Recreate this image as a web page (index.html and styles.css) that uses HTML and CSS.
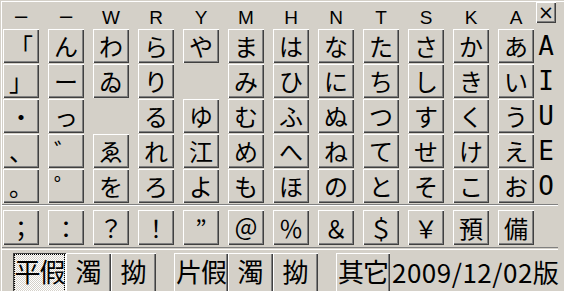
FILE: index.html
```html
<!DOCTYPE html>
<html>
<head>
<meta charset="utf-8">
<title>かな入力パレット</title>
<link rel="stylesheet" href="styles.css">
</head>
<body>
<div class="panel">
  <div class="keyboard">
    <div class="grid">
      <div class="head dash">–</div>
      <div class="head dash">–</div>
      <div class="head">W</div>
      <div class="head">R</div>
      <div class="head">Y</div>
      <div class="head">M</div>
      <div class="head">H</div>
      <div class="head">N</div>
      <div class="head">T</div>
      <div class="head">S</div>
      <div class="head">K</div>
      <div class="head">A</div>

      <div class="key">「</div>
      <div class="key">ん</div>
      <div class="key">わ</div>
      <div class="key">ら</div>
      <div class="key">や</div>
      <div class="key">ま</div>
      <div class="key">は</div>
      <div class="key">な</div>
      <div class="key">た</div>
      <div class="key">さ</div>
      <div class="key">か</div>
      <div class="key">あ</div>

      <div class="key">」</div>
      <div class="key">ー</div>
      <div class="key">ゐ</div>
      <div class="key">り</div>
      <div class="blank"></div>
      <div class="key">み</div>
      <div class="key">ひ</div>
      <div class="key">に</div>
      <div class="key">ち</div>
      <div class="key">し</div>
      <div class="key">き</div>
      <div class="key">い</div>

      <div class="key">・</div>
      <div class="key">っ</div>
      <div class="blank"></div>
      <div class="key">る</div>
      <div class="key">ゆ</div>
      <div class="key">む</div>
      <div class="key">ふ</div>
      <div class="key">ぬ</div>
      <div class="key">つ</div>
      <div class="key">す</div>
      <div class="key">く</div>
      <div class="key">う</div>

      <div class="key">、</div>
      <div class="key">゛</div>
      <div class="key">ゑ</div>
      <div class="key">れ</div>
      <div class="key">江</div>
      <div class="key">め</div>
      <div class="key">へ</div>
      <div class="key">ね</div>
      <div class="key">て</div>
      <div class="key">せ</div>
      <div class="key">け</div>
      <div class="key">え</div>

      <div class="key">。</div>
      <div class="key">゜</div>
      <div class="key">を</div>
      <div class="key">ろ</div>
      <div class="key">よ</div>
      <div class="key">も</div>
      <div class="key">ほ</div>
      <div class="key">の</div>
      <div class="key">と</div>
      <div class="key">そ</div>
      <div class="key">こ</div>
      <div class="key">お</div>
    </div>
    <div class="side">
      <div class="side-head"><div class="close">×</div></div>
      <div class="vowel">A</div>
      <div class="vowel">I</div>
      <div class="vowel">U</div>
      <div class="vowel">E</div>
      <div class="vowel">O</div>
    </div>
  </div>

  <div class="groove"></div>

  <div class="symbols">
    <div class="key">；</div>
    <div class="key">：</div>
    <div class="key">？</div>
    <div class="key">！</div>
    <div class="key">”</div>
    <div class="key">＠</div>
    <div class="key">％</div>
    <div class="key">＆</div>
    <div class="key">＄</div>
    <div class="key">￥</div>
    <div class="key">預</div>
    <div class="key">備</div>
  </div>

  <div class="groove wide"></div>

  <div class="modes">
    <div class="btn w2 pressed">平假</div>
    <div class="btn">濁</div>
    <div class="btn">拗</div>
    <div class="btn w2 gap">片假</div>
    <div class="btn">濁</div>
    <div class="btn">拗</div>
    <div class="btn w2 gap">其它</div>
    <div class="version">2009/12/02版</div>
  </div>
</div>
</body>
</html>
```

FILE: styles.css
```css
* { box-sizing: border-box; }
body { margin: 0; background: #d4d0c8; font-family: "Noto Sans CJK JP", sans-serif; color: #000; }

.panel { width: 563px; height: 290px; margin: 1px 0 0 1px; padding-left: 1px; border-top: 1px solid #fff; border-left: 1px solid #fff; overflow: hidden; }

.keyboard { display: flex; }
.grid { display: grid; grid-template-columns: repeat(12, 36px); grid-template-rows: 26px repeat(5, 34px); column-gap: 9px; row-gap: 1px; }

.head { display: flex; align-items: flex-end; justify-content: center; padding-bottom: 1px; font-family: "Liberation Sans", Arial, sans-serif; font-size: 19px; line-height: 19px; }
.head.dash { font-size: 22px; padding-bottom: 3px; }

.key { display: flex; align-items: center; justify-content: center; background: #d4d0c8; font-size: 24px; line-height: 1; box-shadow: inset 1px 1px #fff, inset -1px -1px #404040, inset -2px -2px #808080; }

.side { width: 24px; display: grid; grid-template-rows: 26px repeat(5, 34px); row-gap: 1px; }
.side-head { display: flex; justify-content: flex-end; padding-right: 2px; }
.close { width: 20px; height: 21px; display: flex; align-items: center; justify-content: center; font-family: "DejaVu Sans", sans-serif; font-size: 19px; line-height: 1; box-shadow: inset 1px 1px #fff, inset -1px -1px #404040, inset -2px -2px #808080; }
.vowel { display: flex; align-items: center; justify-content: center; font-family: "DejaVu Sans Mono", monospace; font-size: 26px; line-height: 1; }

.groove { width: 557px; height: 2px; margin-top: 1px; margin-left: -2px; border-top: 1px solid #808080; border-bottom: 1px solid #fff; }
.groove.wide { height: 3px; margin-top: 2px; }

.symbols { display: grid; grid-template-columns: repeat(12, 36px); column-gap: 9px; height: 35px; margin-top: 4px; }

.modes { display: flex; align-items: flex-start; margin-top: 3px; padding-left: 10px; }
.btn { width: 45px; height: 40px; display: flex; align-items: center; justify-content: center; padding-bottom: 4px; font-size: 26px; line-height: 1; box-shadow: inset 1px 1px #fff, inset -1px -1px #404040, inset -2px -2px #808080; }
.btn.w2 { width: 53px; letter-spacing: -1px; }
.btn.gap { margin-left: 18px; width: 54px; }
.btn.pressed { background: repeating-conic-gradient(#fff 0 25%, #d4d0c8 0 50%) 0 0 / 2px 2px; box-shadow: inset 1px 1px #404040, inset -1px -1px #fff; outline: 1px dotted #000; outline-offset: -2px; }
.version { margin-left: 2px; padding-top: 3px; font-size: 26px; line-height: 1.2; letter-spacing: 0.5px; white-space: nowrap; }
```
